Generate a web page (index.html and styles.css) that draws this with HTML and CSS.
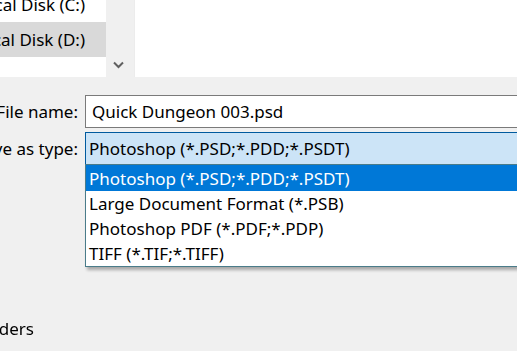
FILE: index.html
```html
<!DOCTYPE html>
<html lang="en">
<head>
    <meta charset="UTF-8">
    <title>Save As</title>
    <link rel="stylesheet" href="styles.css">
</head>
<body>

    <!-- Folder browser -->
    <div class="browser">
        <div class="nav-pane">
            <div class="nav-list">
                <div class="nav-item"><span>Local Disk (C:)</span></div>
                <div class="nav-item selected"><span>Local Disk (D:)</span></div>
            </div>
            <div class="scrollbar">
                <svg width="11" height="8" viewBox="0 0 11 8">
                    <path d="M1 1.5 L5.5 6 L10 1.5" fill="none" stroke="#606060" stroke-width="2"/>
                </svg>
            </div>
        </div>
        <div class="files-pane"></div>
    </div>

    <!-- Save form -->
    <div class="form">
        <div class="row">
            <div class="label"><span>File name:</span></div>
            <div class="input">Quick Dungeon 003.psd</div>
        </div>
        <div class="row">
            <div class="label"><span>Save as type:</span></div>
            <div class="combo">
                <div class="combo-value">Photoshop (*.PSD;*.PDD;*.PSDT)</div>
                <div class="combo-list">
                    <div class="option selected">Photoshop (*.PSD;*.PDD;*.PSDT)</div>
                    <div class="option">Large Document Format (*.PSB)</div>
                    <div class="option">Photoshop PDF (*.PDF;*.PDP)</div>
                    <div class="option">TIFF (*.TIF;*.TIFF)</div>
                </div>
            </div>
        </div>
    </div>

    <!-- Footer -->
    <div class="footer">
        <div class="hide-folders"><span>Hide Folders</span></div>
    </div>

</body>
</html>
```

FILE: styles.css
```css
/* Basic Styling */
html, body {
    margin: 0;
    padding: 0;
    height: 100%;
    overflow: hidden;
}

body {
    font-family: "Noto Sans", "Open Sans", sans-serif;
    font-size: 17px;
    color: #000;
    background: #f0f0f0; /* dialog grey */
}

/* Folder browser area */
.browser {
    display: flex;
    height: 77px;
}

.nav-pane {
    display: flex;
    width: 131px;
    background: #ffffff;
}

.nav-list {
    width: 106px;
    display: flex;
    flex-direction: column;
    justify-content: flex-end;
    padding-bottom: 20px;
    box-sizing: border-box;
    overflow: hidden;
}

.nav-item {
    flex-shrink: 0;
    height: 35px;
    display: flex;
    align-items: center;
    justify-content: flex-end;
    padding-right: 21px;
    white-space: nowrap;
}

.nav-item.selected {
    background: #d9d9d9;
}

.scrollbar {
    width: 25px;
    background: #f0f0f0;
    display: flex;
    align-items: flex-end;
    justify-content: center;
    padding-bottom: 8px;
    box-sizing: border-box;
}

.files-pane {
    flex: 1;
    background: #ffffff;
    margin-left: 3px;
    border-left: 1px solid #ececec;
}

/* Form rows */
.form {
    padding-top: 18px;
    display: flex;
    flex-direction: column;
    gap: 4px;
}

.row {
    display: flex;
    align-items: center;
    gap: 7px;
}

.label {
    width: 78px;
    flex-shrink: 0;
    display: flex;
    justify-content: flex-end;
    white-space: nowrap;
}

.label span {
    flex-shrink: 0;
}

.input {
    flex: 1;
    height: 33px;
    box-sizing: border-box;
    border: 1px solid #7a7a7a;
    background: #ffffff;
    margin-right: -10px;
    padding-left: 6px;
    display: flex;
    align-items: center;
}

/* Save as type combo */
.combo {
    flex: 1;
    position: relative;
    margin-right: -10px;
}

.combo-value {
    height: 33px;
    box-sizing: border-box;
    border: 1px solid #005a9e;
    background: #cce4f7;
    padding-left: 3px;
    display: flex;
    align-items: center;
}

.combo-list {
    position: absolute; /* popup over the dialog */
    top: 32px;
    left: 0;
    right: 0;
    background: #ffffff;
    border: 1px solid #4a7c8a;
    box-shadow: 2px 3px 3px rgba(0, 0, 0, 0.3);
}

.option {
    height: 25px;
    padding-left: 3px;
    display: flex;
    align-items: center;
}

.option.selected {
    height: 26px;
    background: #0078d7;
    color: #ffffff;
}

/* Footer */
.footer {
    position: fixed;
    left: 0;
    bottom: 0;
    height: 34px;
}

.hide-folders {
    width: 34px;
    display: flex;
    justify-content: flex-end;
    white-space: nowrap;
}

.hide-folders span {
    flex-shrink: 0;
}
```
